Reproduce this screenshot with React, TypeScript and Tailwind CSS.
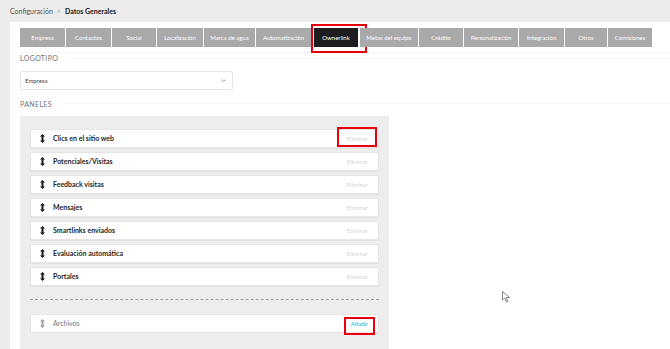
import React from 'react';

const tabs = [
  { label: 'Empresa', w: 45 },
  { label: 'Contactos', w: 45 },
  { label: 'Social', w: 44 },
  { label: 'Localización', w: 46 },
  { label: 'Marca de agua', w: 51 },
  { label: 'Automatización', w: 55 },
  { label: 'Ownerlink', w: 44, active: true },
  { label: 'Metas del equipo', w: 58 },
  { label: 'Crédito', w: 44 },
  { label: 'Personalización', w: 54 },
  { label: 'Integración', w: 45 },
  { label: 'Otros', w: 42 },
  { label: 'Comisiones', w: 44 },
];

const panels = [
  'Clics en el sitio web',
  'Potenciales/Visitas',
  'Feedback visitas',
  'Mensajes',
  'Smartlinks enviados',
  'Evaluación automática',
  'Portales',
];

const DragIcon = ({ light }: { light?: boolean }) => (
  <svg width="5" height="9" viewBox="0 0 5 9" className={light ? 'text-neutral-400' : 'text-neutral-900'}>
    <path d="M2.5 0 L5 2.6 H3.5 V6.4 H5 L2.5 9 L0 6.4 H1.5 V2.6 H0 Z" fill="currentColor" />
  </svg>
);

const SectionTitle = ({ children }: { children: React.ReactNode }) => (
  <div className="flex items-center gap-3">
    <span className="text-[7px] tracking-[0.05em] text-neutral-500">{children}</span>
    <div className="h-px flex-1 bg-neutral-100" />
  </div>
);

const PanelRow = ({ label, first }: { label: string; first?: boolean }) => (
  <div className="relative flex h-[19px] items-center rounded-[2px] border border-neutral-200 bg-white pl-[9px] pr-[10px] shadow-[0_1px_1px_rgba(0,0,0,0.05)]">
    <DragIcon />
    <span className="ml-[8px] text-[7px] font-bold text-neutral-800">{label}</span>
    <span className="ml-auto text-[6px] text-neutral-300">Eliminar</span>
    {first && (
      <div className="absolute right-[1px] top-[-3px] h-[20px] w-[40px] border-2 border-red-600" />
    )}
  </div>
);

export default function App() {
  return (
    <div
      className="relative flex h-[349px] w-[670px] flex-col overflow-hidden bg-[#ececec]"
      style={{ fontFamily: 'Lato, "Open Sans", sans-serif' }}
    >
      {/* Breadcrumb */}
      <div className="flex h-[22px] shrink-0 items-center gap-1 pl-[10px] text-[7px] text-neutral-600">
        <span>Configuración</span>
        <span className="text-neutral-400">&gt;</span>
        <span className="font-bold text-neutral-900">Datos Generales</span>
      </div>

      <div className="ml-[10px] min-h-0 flex-1 overflow-hidden bg-white pl-[10px] pt-[6px]">
        {/* Tabs */}
        <div className="flex h-[19px] gap-[1px]">
          {tabs.map((t) => (
            <div
              key={t.label}
              style={{ width: t.w }}
              className={
                'relative flex shrink-0 items-center justify-center text-[6px] ' +
                (t.active ? 'ml-[2px] mr-[1px] bg-[#1d1d1d] text-white' : 'bg-[#a9a9a9] text-white')
              }
            >
              {t.label}
              {t.active && (
                <div className="absolute left-[-3px] right-[-9px] top-[-4px] bottom-[-6px] border-2 border-red-600" />
              )}
            </div>
          ))}
        </div>
        <div className="mt-[5px] h-px bg-neutral-100" />

        <div className="mt-0">
          <SectionTitle>LOGOTIPO</SectionTitle>
        </div>

        {/* Select */}
        <div className="mt-[7px] flex h-[19px] w-[213px] items-center rounded-[2px] border border-neutral-200 px-[4px]">
          <span className="text-[6px] text-neutral-700">Empresa</span>
          <svg className="ml-auto mr-[2px]" width="5" height="3" viewBox="0 0 5 3">
            <path d="M0.5 0.5 L2.5 2.5 L4.5 0.5" stroke="#888" strokeWidth="0.8" fill="none" />
          </svg>
        </div>

        <div className="mt-[9px]">
          <SectionTitle>PANELES</SectionTitle>
        </div>

        {/* Panels container */}
        <div className="mt-[7px] w-[369px] bg-[#ededed] px-[10px] pt-[13px] pb-[20px]">
          <div className="flex flex-col gap-[4px]">
            {panels.map((p, i) => (
              <PanelRow key={p} label={p} first={i === 0} />
            ))}
          </div>
          <div className="mt-[13px] border-t border-dashed border-neutral-400" />
          <div className="relative mt-[14px] flex h-[19px] items-center rounded-[2px] border border-neutral-200 bg-white pl-[9px] pr-[10px]">
            <DragIcon light />
            <span className="ml-[8px] text-[7px] text-neutral-500">Archivos</span>
            <span className="ml-auto text-[6px] text-cyan-500">Añadir</span>
            <div className="absolute right-[3px] top-[2px] h-[18px] w-[31px] border-2 border-red-600" />
          </div>
        </div>
      </div>

      {/* Cursor */}
      <svg className="absolute left-[502px] top-[291px]" width="9" height="12" viewBox="0 0 9 12">
        <path d="M0.5 0.5 L0.5 9 L2.8 7 L4.5 11 L6 10.3 L4.3 6.5 L7.5 6.5 Z" fill="white" stroke="#666" strokeWidth="0.8" />
      </svg>
    </div>
  );
}
